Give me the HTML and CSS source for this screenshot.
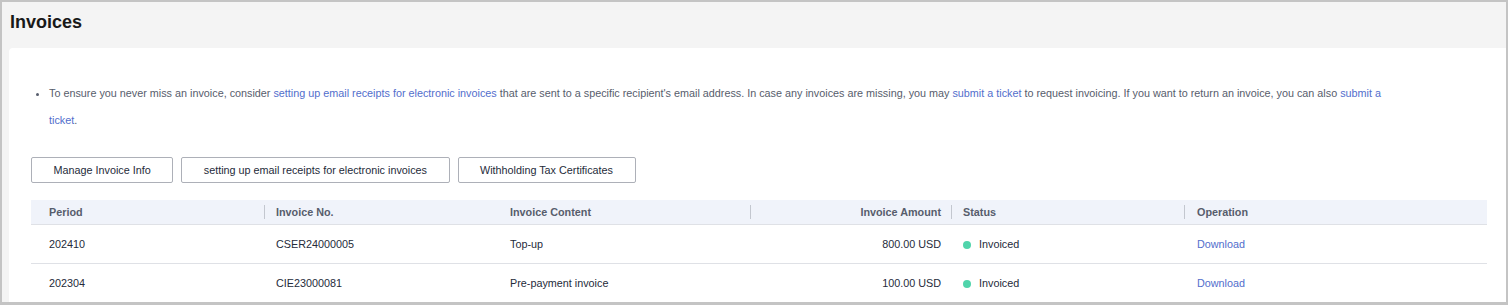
FILE: index.html
```html
<!DOCTYPE html>
<html lang="en">
<head>
    <meta charset="UTF-8">
    <meta name="viewport" content="width=device-width, initial-scale=1.0">
    <title>Invoices</title>
    <link rel="stylesheet" href="styles.css">
</head>
<body>
    <div class="frame">
        <h1>Invoices</h1>

        <div class="card">
            <ul class="notice">
                <li>To ensure you never miss an invoice, consider <a href="#">setting up email receipts for electronic invoices</a> that are sent to a specific recipient's email address. In case any invoices are missing, you may <a href="#">submit a ticket</a> to request invoicing. If you want to return an invoice, you can also <a href="#">submit a ticket</a>.</li>
            </ul>

            <div class="actions">
                <button type="button">Manage Invoice Info</button>
                <button type="button">setting up email receipts for electronic invoices</button>
                <button type="button">Withholding Tax Certificates</button>
            </div>

            <table class="invoices">
                <colgroup>
                    <col class="c-period">
                    <col class="c-no">
                    <col class="c-content">
                    <col class="c-amount">
                    <col class="c-status">
                    <col class="c-op">
                </colgroup>
                <thead>
                    <tr>
                        <th class="sep">Period</th>
                        <th>Invoice No.</th>
                        <th class="sep">Invoice Content</th>
                        <th class="sep amount">Invoice Amount</th>
                        <th class="sep">Status</th>
                        <th>Operation</th>
                    </tr>
                </thead>
                <tbody>
                    <tr>
                        <td>202410</td>
                        <td>CSER24000005</td>
                        <td>Top-up</td>
                        <td class="amount">800.00 USD</td>
                        <td><span class="dot"></span>Invoiced</td>
                        <td><a href="#">Download</a></td>
                    </tr>
                    <tr>
                        <td>202304</td>
                        <td>CIE23000081</td>
                        <td>Pre-payment invoice</td>
                        <td class="amount">100.00 USD</td>
                        <td><span class="dot"></span>Invoiced</td>
                        <td><a href="#">Download</a></td>
                    </tr>
                </tbody>
            </table>
        </div>
    </div>
</body>
</html>
```

FILE: styles.css
```css
body { margin: 0; font-family: "Liberation Sans", Arial, sans-serif; font-size: 10.8px; color: #252b3a; }
a { color: #526ecc; text-decoration: none; }

.frame { height: 305px; box-sizing: border-box; border: 2px solid #c4c4c4; border-bottom-width: 3px; background: #f4f4f4; overflow: hidden; }
h1 { margin: 8px 0 14px 8px; font-size: 18px; line-height: 24px; font-weight: bold; color: #191919; }

.card { margin-left: 7px; padding: 32px 19px 0 22px; background: #fff; border-radius: 4px 0 0 0; height: 100%; }

.notice { margin: 0 89px 0 0; padding-left: 18px; line-height: 26.6px; color: #575d6c; }

.actions { display: flex; gap: 8px; margin-top: 24px; }
.actions button { height: 26px; padding: 0 21.5px; border: 1px solid #adb0b8; border-radius: 2px; background: #fff; color: #252b3a; font-family: inherit; font-size: 10.8px; cursor: pointer; }

.invoices { margin-top: 17px; width: 1456px; table-layout: fixed; border-collapse: collapse; }
.c-period { width: 234px; }
.c-no { width: 234px; }
.c-content { width: 252px; }
.c-amount { width: 201px; }
.c-status { width: 233px; }
.c-op { width: 302px; }

.invoices th { position: relative; height: 24px; padding: 0 11px; background: #f0f3fa; color: #575d6c; font-weight: bold; text-align: left; border-bottom: 1px solid #dfe1e6; }
.invoices th.sep::after { content: ""; position: absolute; right: 0; top: 5px; width: 1px; height: 14px; background: #c3c7cf; }
.invoices td { height: 38px; padding: 0 11px; border-bottom: 1px solid #dfe1e6; white-space: nowrap; }
.invoices th:first-child, .invoices td:first-child { padding-left: 18px; }
.invoices th:last-child, .invoices td:last-child { padding-left: 12px; }
.invoices .amount { text-align: right; }

.dot { display: inline-block; width: 8px; height: 8px; margin-right: 8px; border-radius: 50%; background: #50d4ab; vertical-align: -1px; }
```
